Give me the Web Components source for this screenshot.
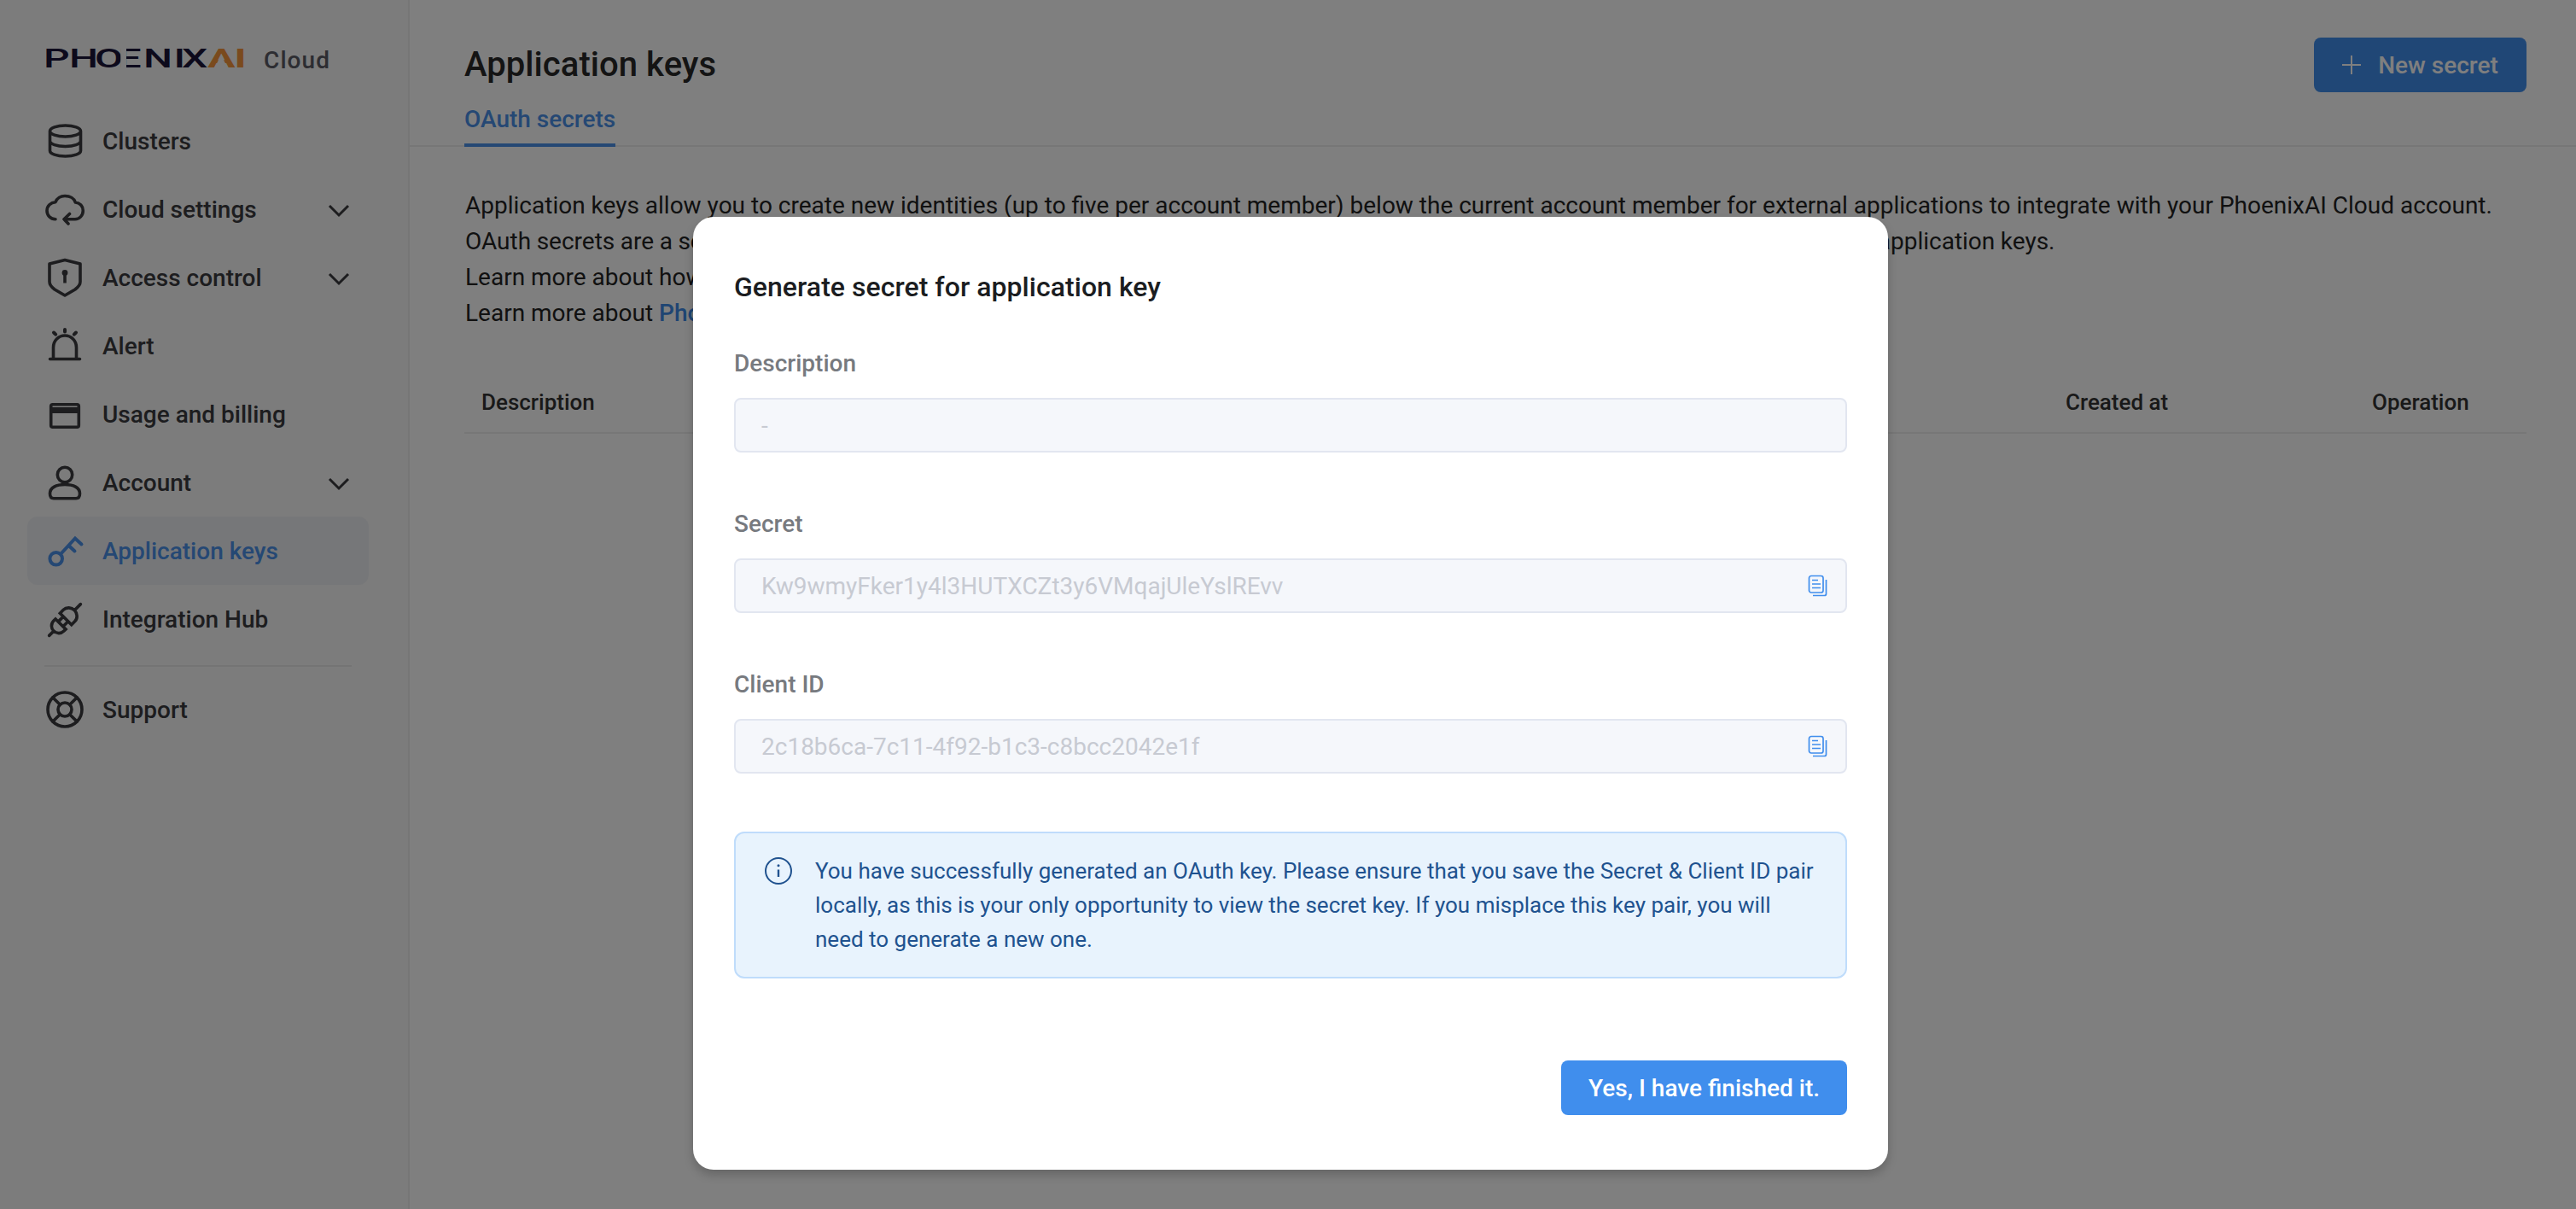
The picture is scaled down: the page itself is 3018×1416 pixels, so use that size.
<!DOCTYPE html>
<html lang="en"><head><meta charset="utf-8"><title>Application keys</title>
<style>
html,body{margin:0;height:100%;overflow:hidden;background:#fff;font-family:Roboto,"Liberation Sans",sans-serif}
</style></head><body>
<px-app></px-app>
<template id="t-app"><style>
:host{display:flex;width:3018px;height:1416px;position:relative;overflow:hidden;color:#222}
</style><px-sidebar></px-sidebar><px-main></px-main>
<px-modal></px-modal></template>
<script>
const ICONS={
db:'<path d="M6.500 12.500a18 6.500 0 1 0 36 0a18 6.500 0 1 0-36 0ZM6.500 12.500V35.500c0 3.800 8 6.500 18 6.500s18-2.700 18-6.500V12.500M6.500 24c0 3.800 8 6.500 18 6.500s18-2.700 18-6.500"/>',
cloud:'<path d="M13 35.700C7 35.700 3 31 3 25.700C3 20 7.500 16 13 15.700C14.500 11.500 19 8.500 24 8.500C30 8.500 35 11.500 36.300 16C41.500 16.500 45.300 20.500 45.300 25.700C45.300 31.500 41 35.700 36 35.700H23M29.500 29.500L23 35.700L28 41"/>',
shield:'<path d="M24 3.500L42 8V29C42 33 40 35 36 38L24 45L12 38C8 35 6 33 6 29V8Z"/><circle cx="24" cy="18.500" r="3.400" fill="currentColor" stroke="none"/><path d="M24 19V30.500" stroke-width="3.600" stroke-linecap="butt"/>',
alert:'<path d="M10.500 38V26C10.500 18 16.500 12 24 12C31.500 12 37.500 18 37.500 26V38M6.500 39.500H41.500"/><path d="M24 5V7.500M11 8.500L13.200 10.700M37 8.500L34.800 10.700" stroke-width="4" stroke-linecap="round"/>',
card:'<rect x="7.700" y="12.700" width="32.600" height="26.600" rx="2"/><rect x="6" y="16" width="36" height="7" fill="currentColor" stroke="none"/>',
user:'<circle cx="24" cy="15" r="8.700"/><path d="M6.500 37C6.500 30 14 26.500 24 26.500C34 26.500 41.500 30 41.500 37C41.500 41 39.500 42.700 37 42.700H11C8.500 42.700 6.500 41 6.500 37Z"/>',
key:'<circle cx="13.700" cy="33.300" r="7.300" stroke-width="4"/><path d="M19 28L36 9.500L43.500 16.500M28.500 18L35.500 24.500" stroke-width="4" stroke-linejoin="miter"/>',
plug:'<g transform="translate(24 25) rotate(-45)"><path d="M-26 0H-19M-7-8.500H-10C-15-8.500-18.500-4.500-18.500 0C-18.500 4.500-15 8.500-10 8.500H-7ZM-7-4H-1M-7 4H-1M1.500-9.500H7C12-9.500 16-5 16 0C16 5 12 9.500 7 9.500H1.500ZM16 0H26" stroke-linejoin="miter"/></g>',
life:'<circle cx="24" cy="24" r="20"/><circle cx="24" cy="24" r="8"/><path d="M18.300 18.300L9.900 9.900M29.700 18.300L38.100 9.900M18.300 29.700L9.900 38.100M29.700 29.700L38.100 38.100"/>'
};
function def(name,html){customElements.define(name,class extends HTMLElement{
  connectedCallback(){if(this.shadowRoot)return;const s=this.attachShadow({mode:'open'});s.innerHTML=typeof html==='function'?html(this):html;}
});}
customElements.define('px-app',class extends HTMLElement{connectedCallback(){const s=this.attachShadow({mode:'open'});s.appendChild(document.getElementById('t-app').content.cloneNode(true));}});

def('px-logo',`<style>
:host{display:flex;align-items:center;height:40px}
svg{display:block;overflow:visible}
span{margin-left:22px;font-size:28px;font-weight:500;color:#5a5a64;letter-spacing:1.100px}
</style><svg width="232" height="30" viewBox="0 0 232 30" aria-label="PhoenixAI">
<text transform="scale(1.55 1)" y="24" font-family="Roboto" font-size="31" font-weight="500" fill="#1a1438" x="-2.600 16.800 36.100 53.800 72.900 95.800 101.900">PHOENIX<tspan fill="#f4943a" font-weight="700" x="121.400 141.600">AI</tspan></text>
<rect x="86.300" y="0" width="6.700" height="26" fill="#f8f8f8"/>
<polygon points="204,10 196,24.500 212,24.500" fill="#f8f8f8"/>
</svg><span>Cloud</span>`);

def('px-nav-item',el=>{
 const active=el.hasAttribute('active'),chev=el.hasAttribute('expand');
 return `<style>
:host{display:flex;align-items:center;height:80px;width:400px;box-sizing:border-box;padding-left:20px;border-radius:12px;font-size:28px;font-weight:500;color:${active?'#4a90e8':'#3a3a3e'};${active?'background:#edeff2;':''}}
.i{width:48px;height:48px;flex:none;fill:none;stroke:currentColor;stroke-width:3.600;stroke-linejoin:round;stroke-linecap:round}
.t{margin-left:20px;flex:1;white-space:nowrap}
.c{width:26px;height:16px;flex:none;margin-right:22px;margin-top:4px;fill:none;stroke:currentColor;stroke-width:3}
</style><svg class="i" viewBox="0 0 48 48">${ICONS[el.getAttribute('icon')]}</svg><span class="t"><slot></slot></span>${chev?'<svg class="c" viewBox="0 0 26 16"><path d="M2 2L13 13L24 2"/></svg>':''}`;});

def('px-sidebar',`<style>
:host{display:flex;flex-direction:column;width:480px;height:100%;flex:none;box-sizing:border-box;border-right:2px solid #ececec;background:#f8f8f8;padding:50px 0 0 32px}
px-logo{margin-left:23px;margin-bottom:35px}
hr{border:0;height:2px;background:#e8e8e8;width:360px;margin:14px 0 10px 20px}
</style><px-logo></px-logo>
<px-nav-item icon="db">Clusters</px-nav-item>
<px-nav-item icon="cloud" expand>Cloud settings</px-nav-item>
<px-nav-item icon="shield" expand>Access control</px-nav-item>
<px-nav-item icon="alert">Alert</px-nav-item>
<px-nav-item icon="card">Usage and billing</px-nav-item>
<px-nav-item icon="user" expand>Account</px-nav-item>
<px-nav-item icon="key" active>Application keys</px-nav-item>
<px-nav-item icon="plug">Integration Hub</px-nav-item>
<hr>
<px-nav-item icon="life">Support</px-nav-item>`);

def('px-button',el=>`<style>
:host{display:inline-flex;align-items:center;justify-content:center;height:64px;box-sizing:border-box;padding:0 32px;border-radius:8px;background:#408eed;color:#fff;font-size:28px;font-weight:500;white-space:nowrap}
svg{width:22px;height:24px;margin-right:20px;fill:none;stroke:currentColor;stroke-width:2}
</style>${el.hasAttribute('plus')?'<svg viewBox="0 0 22 24"><path d="M11 1V23M0 12H22"/></svg>':''}<slot></slot>`);

def('px-page-header',`<style>
:host{display:flex;justify-content:space-between;height:172px;box-sizing:border-box;border-bottom:2px solid #efefef;padding:0 58px 0 64px;position:relative}
h1{margin:48px 0 0;font-size:40px;line-height:56px;font-weight:500;color:#282828;letter-spacing:.06px}
.tab{display:block;margin-top:15px;height:42px;line-height:42px;width:max-content;padding-bottom:7px;border-bottom:4px solid #4a90e8;font-size:28px;font-weight:500;color:#4a90e8;position:relative}
px-button{margin-top:44px;width:249px;padding:0}
</style><div><h1>Application keys</h1><div class="tab">OAuth secrets</div></div><px-button plus>New secret</px-button>`);

def('px-intro',`<style>
:host{display:block;padding:48px 58px 0 65px;font-size:28px;line-height:42px;color:#222;white-space:nowrap}
a{color:#3f8ae6;font-weight:500;text-decoration:none}
.l2{word-spacing:-.42px}
</style><div>Application keys allow you to create new identities (up to five per account member) below the current account member for external applications to integrate with your PhoenixAI Cloud account.</div>
<div class="l2">OAuth secrets are a secure and convenient method of authentication for these applications, and each one is generated for one of your application keys.</div>
<div>Learn more about how</div>
<div>Learn more about <a>PhoenixAI</a></div>`);

def('px-table-head',`<style>
:host{display:grid;grid-template-columns:1fr 359px 181px;align-items:center;height:73px;box-sizing:border-box;margin:47px 58px 0 64px;padding-left:20px;border-bottom:2px solid #efefef;font-size:26px;font-weight:500;color:#333}
</style><span>Description</span><span>Created at</span><span>Operation</span>`);

def('px-main',`<style>
:host{display:block;flex:1;min-width:0;background:#fff}
</style><px-page-header></px-page-header><px-intro></px-intro><px-table-head></px-table-head>`);

def('px-field',el=>`<style>
:host{display:block;margin-bottom:62px}
label{display:block;box-sizing:border-box;height:42px;padding-top:1px;line-height:42px;font-size:28px;font-weight:500;color:#777a7f;margin-bottom:20px}
.b{display:flex;align-items:center;height:64px;box-sizing:border-box;border:2px solid #e2e6f0;border-radius:8px;background:#f5f7fb;padding:0 20px 0 30px;font-size:28px;color:#c7cad2}
.v{flex:1}
svg{width:24px;height:26px;fill:none;stroke:#408eed;stroke-width:1.700}
</style><label>${el.getAttribute('label')}</label><div class="b"><span class="v">${el.getAttribute('value')}</span>${el.hasAttribute('copy')?'<svg viewBox="0 0 24 26"><rect x="1.500" y="1.500" width="16.500" height="19.500" rx="2.500"/><path d="M5 6.500H12M5 11H15M5 15.500H15M21.500 6V22.500a2 2 0 0 1-2 2H6"/></svg>':''}</div>`);

def('px-alert',`<style>
:host{display:flex;box-sizing:border-box;height:172px;border:2px solid #bfdcfb;border-radius:12px;background:#e8f3fd;padding:24px 34px 24px 34px;color:#20528f;font-size:26px;line-height:40px}
svg{width:32px;height:32px;flex:none;margin:4px 27px 0 0;fill:none;stroke:currentColor;stroke-width:2}
</style><svg viewBox="0 0 32 32"><circle cx="16" cy="16" r="15"/><path d="M16 14.500V23" stroke-width="2.400"/><circle cx="16" cy="9.800" r="1.500" fill="currentColor" stroke="none"/></svg><div><slot></slot></div>`);

def('px-modal',`<style>
:host{position:absolute;inset:0;background:rgba(0,0,0,.5);display:block;padding:254px 0 0 812px;box-sizing:border-box}
.d{width:1400px;height:1116px;box-sizing:border-box;background:#fff;border-radius:24px;box-shadow:0 6px 12px rgba(0,0,0,.2);padding:58px 48px 64px}
h2{margin:0 0 44px;font-size:32px;line-height:48px;font-weight:500;color:#1b1d21;letter-spacing:.04px}
px-alert{margin-top:68px}
.f{display:flex;justify-content:flex-end;margin-top:96px}
</style><div class="d"><h2>Generate secret for application key</h2>
<px-field label="Description" value="-"></px-field>
<px-field label="Secret" value="Kw9wmyFker1y4l3HUTXCZt3y6VMqajUleYslREvv" copy></px-field>
<px-field label="Client ID" value="2c18b6ca-7c11-4f92-b1c3-c8bcc2042e1f" copy style="margin-bottom:0"></px-field>
<px-alert>You have successfully generated an OAuth key. Please ensure that you save the Secret &amp; Client ID pair locally, as this is your only opportunity to view the secret key. If you misplace this key pair, you will need to generate a new one.</px-alert>
<div class="f"><px-button>Yes, I have finished it.</px-button></div></div>`);
</script>
</body></html>
